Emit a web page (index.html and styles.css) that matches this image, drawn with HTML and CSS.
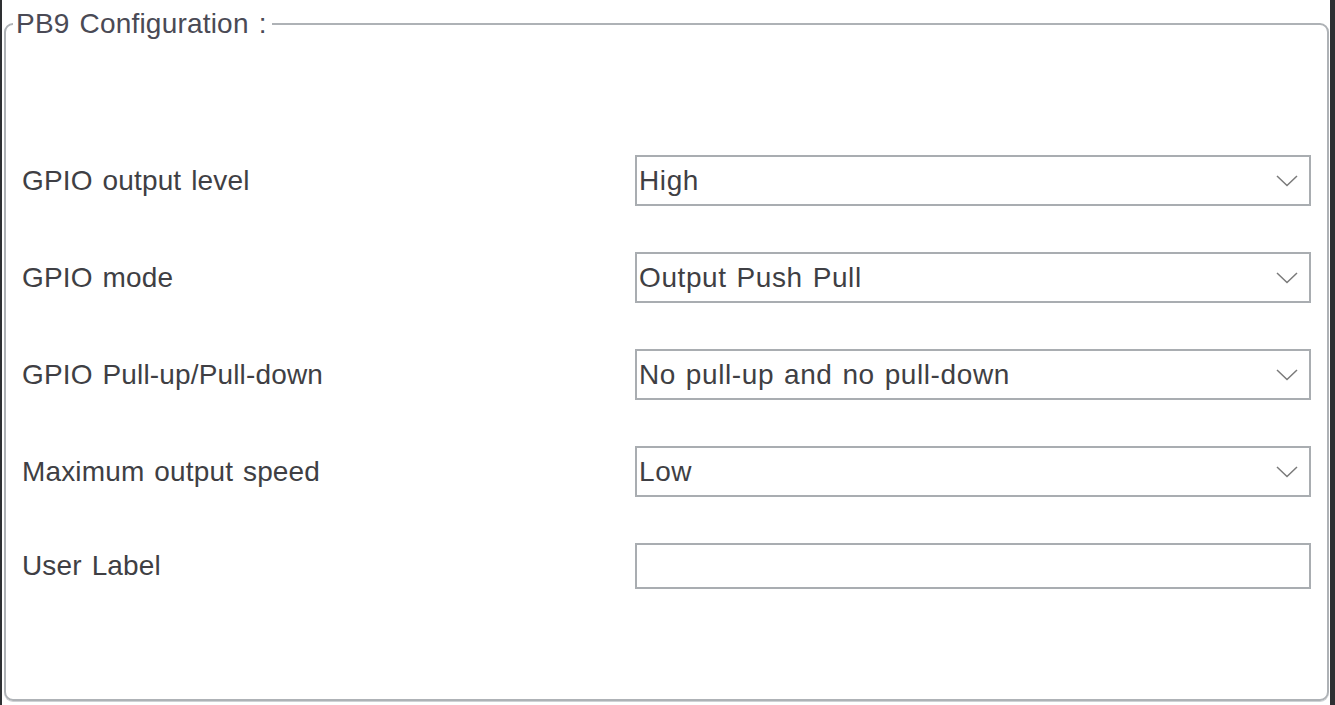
FILE: index.html
```html
<!DOCTYPE html>
<html>
<head>
<meta charset="utf-8">
<link rel="stylesheet" href="styles.css">
</head>
<body>
<div class="strip strip-left"></div>
<fieldset class="frame">
  <legend class="frame-title">PB9 Configuration :</legend>
  <div class="rows">
    <div class="row">
      <div class="label">GPIO output level</div>
      <div class="select"><span class="value">High</span><svg class="chev" width="22" height="12" viewBox="0 0 22 12"><path d="M1 1 L11 10.5 L21 1" fill="none" stroke="#7a7a7a" stroke-width="1.5"/></svg></div>
    </div>
    <div class="row">
      <div class="label">GPIO mode</div>
      <div class="select"><span class="value">Output Push Pull</span><svg class="chev" width="22" height="12" viewBox="0 0 22 12"><path d="M1 1 L11 10.5 L21 1" fill="none" stroke="#7a7a7a" stroke-width="1.5"/></svg></div>
    </div>
    <div class="row">
      <div class="label">GPIO Pull-up/Pull-down</div>
      <div class="select"><span class="value">No pull-up and no pull-down</span><svg class="chev" width="22" height="12" viewBox="0 0 22 12"><path d="M1 1 L11 10.5 L21 1" fill="none" stroke="#7a7a7a" stroke-width="1.5"/></svg></div>
    </div>
    <div class="row">
      <div class="label">Maximum output speed</div>
      <div class="select"><span class="value">Low</span><svg class="chev" width="22" height="12" viewBox="0 0 22 12"><path d="M1 1 L11 10.5 L21 1" fill="none" stroke="#7a7a7a" stroke-width="1.5"/></svg></div>
    </div>
    <div class="row row-input">
      <div class="label">User Label</div>
      <input class="text-input" type="text" value="">
    </div>
  </div>
</fieldset>
<div class="strip strip-right"></div>
</body>
</html>
```
FILE: styles.css
```css
html, body {
  margin: 0;
  padding: 0;
  background: #ffffff;
}
body {
  display: flex;
  width: 1335px;
  height: 705px;
  overflow: hidden;
  font-family: "Liberation Sans", Arial, sans-serif;
  font-size: 28px;
  color: #3f3f44;
}
.strip {
  flex: 0 0 auto;
  height: 705px;
  background: #2e3033;
}
.strip-left { width: 2px; }
.strip-right { width: 5px; }
.frame {
  flex: 0 0 auto;
  box-sizing: border-box;
  width: 1325px;
  height: 693px;
  margin: 8px 1px 0 2px;
  padding: 0 16px 0 16px;
  border: 2px solid #aeb2b6;
  border-radius: 9px;
  box-shadow: 0 1px 0 #cfd2d5;
}
.frame-title {
  margin-left: -9px;
  padding: 0 5px 0 3px;
  line-height: 32px;
  font-size: 28px;
  letter-spacing: 0.2px;
  word-spacing: 2px;
  color: #4a4a55;
}
.rows {
  display: flex;
  flex-direction: column;
  gap: 46px;
  padding-top: 115px;
}
.row {
  display: flex;
  align-items: center;
  justify-content: space-between;
  height: 51px;
}
.row-input { height: 46px; }
.label {
  line-height: 32px;
  letter-spacing: 0.15px;
  word-spacing: 2px;
}
.select {
  box-sizing: border-box;
  width: 676px;
  height: 51px;
  border: 2px solid #a9adb1;
  display: flex;
  align-items: center;
  justify-content: space-between;
  padding: 0 11px 0 2px;
  background: #fff;
}
.value {
  line-height: 32px;
  letter-spacing: 0.6px;
  word-spacing: 1.5px;
  color: #3f3f44;
}
.chev { display: block; margin-top: 1px; }
.text-input {
  box-sizing: border-box;
  width: 676px;
  height: 46px;
  border: 2px solid #a9adb1;
  margin: 0;
  padding: 0 3px;
  font: inherit;
  background: #fff;
  outline: none;
}
```
